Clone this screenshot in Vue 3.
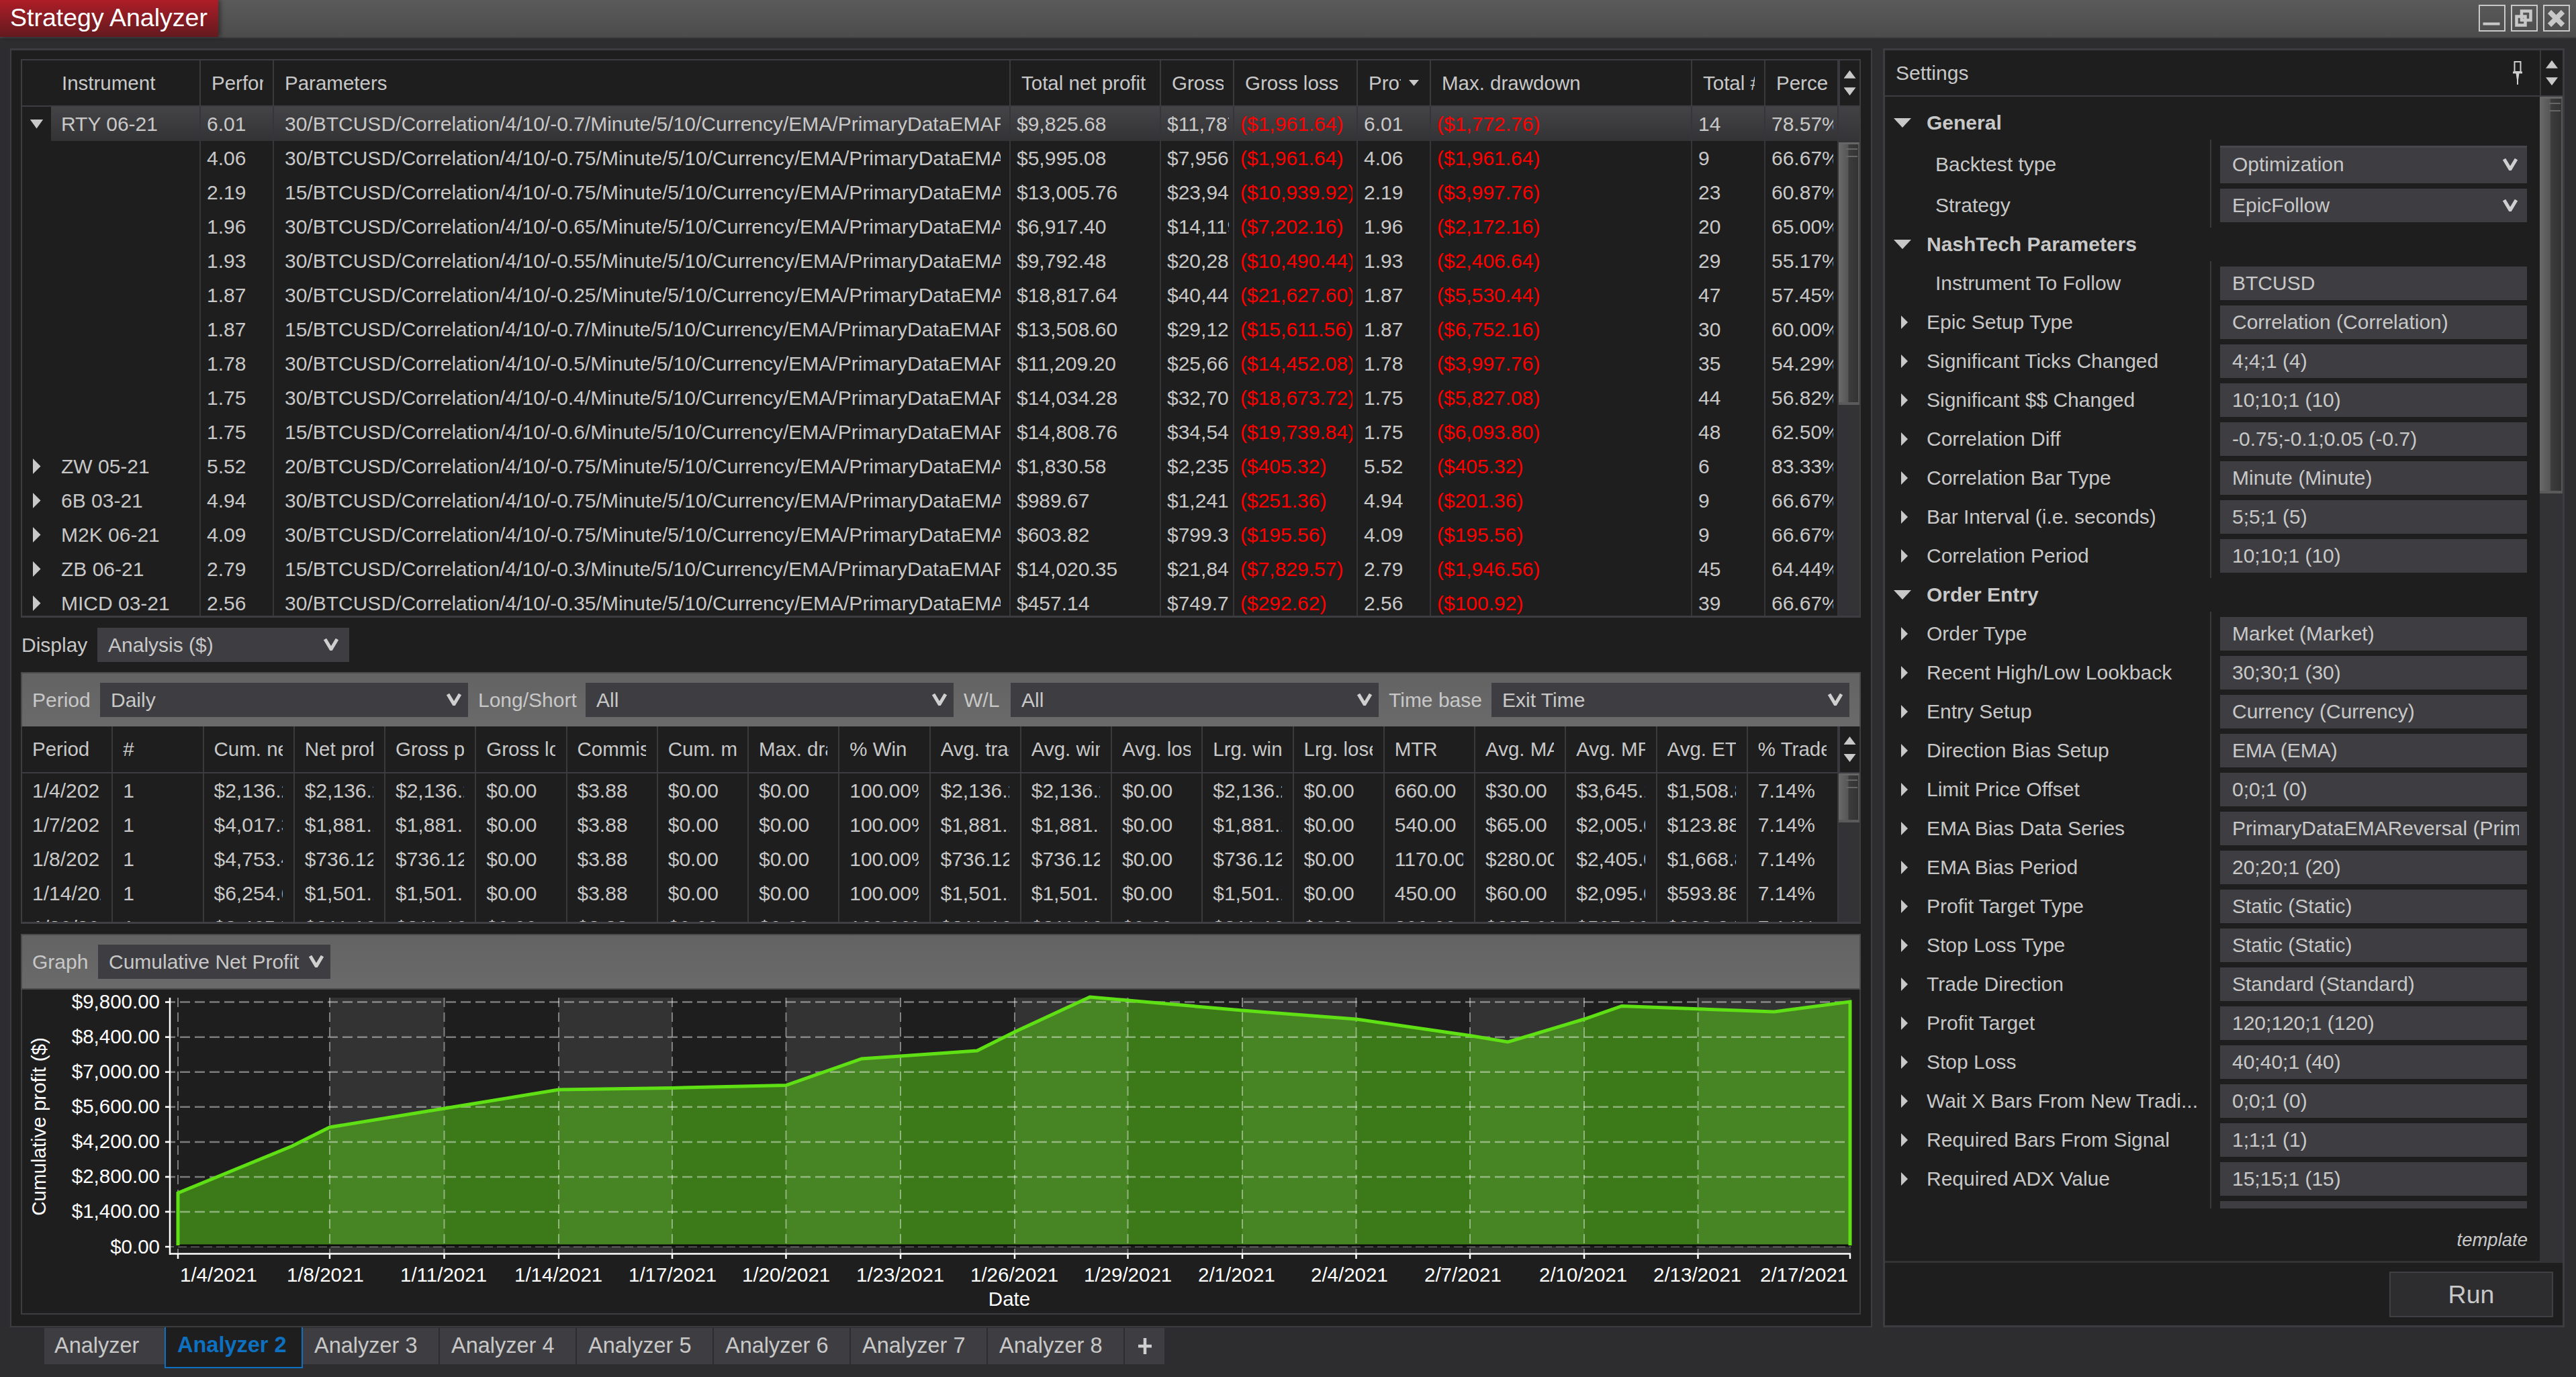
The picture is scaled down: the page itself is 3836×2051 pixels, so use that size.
<template>
  <div class="app">
    <header class="titlebar">
      <div class="title">Strategy Analyzer</div>
      <div class="win-btns">
        <button class="win-btn">
          <svg width="35" height="35" viewBox="0 0 35 35"><rect x="4.5" y="23.5" width="25" height="4" fill="#c8c8c8" /></svg>
        </button>
        <button class="win-btn">
          <svg width="35" height="35" viewBox="0 0 35 35" fill="none" stroke="#c8c8c8" stroke-width="4.5">
            <rect x="14" y="6.5" width="13.5" height="13.5" />
            <rect x="6.5" y="14.5" width="13" height="13" />
          </svg>
        </button>
        <button class="win-btn">
          <svg width="35" height="35" viewBox="0 0 35 35"><path d="M7.5 7.5L27.5 27.5M27.5 7.5L7.5 27.5" stroke="#c8c8c8" stroke-width="7.5" /></svg>
        </button>
      </div>
    </header>

    <main class="main">
      <section class="left">
        <div class="grid1">
          <div class="g1-head">
            <div class="g1-cols">
              <div class="hc exp"></div>
              <div v-for="h in headers1" :key="h.t" class="hc" :class="{ sorted: h.sort }">
                <span class="clip">{{ h.t }}</span>
                <i v-if="h.sort" class="tri down sort"></i>
              </div>
            </div>
            <div class="sb-btns">
              <i class="tri up"></i>
              <i class="tri down"></i>
            </div>
          </div>
          <div class="g1-body">
            <div class="g1-rows">
              <div v-for="(r, i) in rows1" :key="i" class="g1-cols row" :class="{ sel: i === 0 }">
                <div class="exp dc">
                  <i v-if="i === 0" class="tri down exp-tri"></i>
                  <i v-else-if="r.inst" class="tri right exp-tri"></i>
                </div>
                <div class="dc"><span class="clip inst">{{ r.inst }}</span></div>
                <div class="dc"><span class="clip">{{ r.perf }}</span></div>
                <div class="dc params"><span class="clip">{{ r.params }}</span></div>
                <div class="dc"><span class="clip">{{ money(r.net) }}</span></div>
                <div class="dc"><span class="clip">{{ money(r.net + r.loss) }}</span></div>
                <div class="dc neg"><span class="clip">({{ money(r.loss) }})</span></div>
                <div class="dc"><span class="clip">{{ r.perf }}</span></div>
                <div class="dc neg"><span class="clip">({{ money(r.dd) }})</span></div>
                <div class="dc"><span class="clip">{{ r.total }}</span></div>
                <div class="dc"><span class="clip">{{ r.pct }}%</span></div>
              </div>
            </div>
            <div class="scrollbar">
              <div class="sb-sel"></div>
              <div class="thumb thumb1"></div>
            </div>
          </div>
        </div>

        <div class="display">
          <label class="lbl">Display</label>
          <div class="select">
            Analysis ($)
            <svg class="chev" width="24" height="18" viewBox="0 0 24 18"><path d="M3 1L12 16L21 1" fill="none" stroke="#cfcfcf" stroke-width="5" /></svg>
          </div>
        </div>

        <div class="toolbar filters">
          <label class="lbl">Period</label>
          <div class="select">
            Daily
            <svg class="chev" width="24" height="18" viewBox="0 0 24 18"><path d="M3 1L12 16L21 1" fill="none" stroke="#cfcfcf" stroke-width="5" /></svg>
          </div>
          <label class="lbl">Long/Short</label>
          <div class="select">
            All
            <svg class="chev" width="24" height="18" viewBox="0 0 24 18"><path d="M3 1L12 16L21 1" fill="none" stroke="#cfcfcf" stroke-width="5" /></svg>
          </div>
          <label class="lbl">W/L</label>
          <div class="select">
            All
            <svg class="chev" width="24" height="18" viewBox="0 0 24 18"><path d="M3 1L12 16L21 1" fill="none" stroke="#cfcfcf" stroke-width="5" /></svg>
          </div>
          <label class="lbl">Time base</label>
          <div class="select">
            Exit Time
            <svg class="chev" width="24" height="18" viewBox="0 0 24 18"><path d="M3 1L12 16L21 1" fill="none" stroke="#cfcfcf" stroke-width="5" /></svg>
          </div>
        </div>

        <div class="grid2">
          <div class="g2-head">
            <div class="g2-cols">
              <div v-for="h in headers2" :key="h" class="hc2"><span class="clip">{{ h }}</span></div>
            </div>
            <div class="sb-btns">
              <i class="tri up"></i>
              <i class="tri down"></i>
            </div>
          </div>
          <div class="g2-body">
            <div class="g2-rows">
              <div v-for="(r, i) in rows2" :key="i" class="g2-cols row">
                <div v-for="(c, j) in r" :key="j" class="dc2"><span class="clip">{{ c }}</span></div>
              </div>
            </div>
            <div class="scrollbar">
              <div class="thumb thumb2"></div>
            </div>
          </div>
        </div>

        <div class="toolbar graphbar">
          <label class="lbl">Graph</label>
          <div class="select">
            Cumulative Net Profit
            <svg class="chev" width="24" height="18" viewBox="0 0 24 18"><path d="M3 1L12 16L21 1" fill="none" stroke="#cfcfcf" stroke-width="5" /></svg>
          </div>
        </div>

        <div class="chart">
          <svg class="chart-svg" viewBox="33 1474 2736 482">
            <rect v-for="b in bands" :key="b[0]" :x="b[0]" y="1486" :width="b[1] - b[0]" height="381" fill="#333333" />
            <polygon :points="areaPoints" fill="#5fe014" fill-opacity="0.48" />
            <g stroke="#ffffff" stroke-opacity="0.42" fill="none">
              <line v-for="y in gridY.slice(0, 7)" :key="y" x1="246" x2="2756" :y1="y" :y2="y" stroke-width="2.5" stroke-dasharray="15 7" />
              <line x1="246" x2="2756" y1="1857" y2="1857" stroke-width="1.5" stroke-dasharray="13 6" />
              <line v-for="x in gridX" :key="x" :x1="x" :x2="x" y1="1486" y2="1867" stroke-width="2" stroke-dasharray="14 8" />
            </g>
            <line x1="265" x2="2756" y1="1855" y2="1855" stroke="#0c0c0c" stroke-width="3" />
            <polyline :points="linePoints" fill="none" stroke="#5fe014" stroke-width="5" />
            <g stroke="#ffffff" stroke-width="2.5">
              <line x1="253" x2="253" y1="1486" y2="1869" />
              <line x1="252" x2="2756" y1="1867.5" y2="1867.5" />
              <line v-for="y in gridY" :key="'t' + y" x1="246" x2="253" :y1="y" :y2="y" />
              <line v-for="x in gridX" :key="'u' + x" :x1="x" :x2="x" y1="1867" y2="1875" />
              <line x1="2755" x2="2755" y1="1867" y2="1875" />
            </g>
            <g class="axis-txt">
              <text v-for="(l, i) in yLabels" :key="l" x="238" :y="gridY[i] + 9.5" text-anchor="end">{{ l }}</text>
              <text v-for="l in xLabels" :key="l[1]" :x="l[0]" y="1909">{{ l[1] }}</text>
              <text x="1503" y="1945" text-anchor="middle">Date</text>
              <text transform="translate(68 1678) rotate(-90)" text-anchor="middle">Cumulative profit ($)</text>
            </g>
          </svg>
        </div>
      </section>

      <aside class="settings">
        <div class="set-head">
          <span class="set-title">Settings</span>
          <svg class="pin" width="16" height="36" viewBox="0 0 16 36" fill="none" stroke="#cfcfcf" stroke-width="2">
            <rect x="3.5" y="1" width="9" height="15" />
            <path d="M1 17H15" stroke-width="3" />
            <path d="M8 18V35" />
            <path d="M5.5 18L8 35L10.5 18Z" fill="#cfcfcf" stroke="none" />
          </svg>
          <div class="sb-btns set-btns">
            <i class="tri up"></i>
            <i class="tri down"></i>
          </div>
        </div>
        <div class="set-body">
          <div class="set-content">
            <div class="set-list">
              <template v-for="g in settings" :key="g.name">
                <div class="prop-head">
                  <i class="tri down head-tri"></i>
                  <span>{{ g.name }}</span>
                </div>
                <div class="prop-group">
                  <div v-for="p in g.props" :key="p.label" class="prop" :class="p.cls">
                    <div class="prop-label" :class="{ plain: !p.arrow }">
                      <i v-if="p.arrow" class="tri right prop-tri"></i>
                      <span>{{ p.label }}</span>
                    </div>
                    <div class="prop-val">
                      <div class="val-box">
                        <span class="clip val-txt">{{ p.value }}</span>
                        <svg v-if="p.drop" class="chev" width="24" height="18" viewBox="0 0 24 18"><path d="M3 1L12 16L21 1" fill="none" stroke="#cfcfcf" stroke-width="5" /></svg>
                      </div>
                    </div>
                  </div>
                </div>
              </template>
            </div>
            <div class="template-note">template</div>
          </div>
          <div class="scrollbar set-sb">
            <div class="thumb thumb3"></div>
          </div>
        </div>
        <div class="set-foot">
          <button class="run">Run</button>
        </div>
      </aside>
    </main>

    <nav class="tabs">
      <div v-for="(t, i) in tabs" :key="t" class="tab" :class="{ first: i === 0, active: i === 1 }">{{ t }}</div>
      <div class="tab add">
        <svg width="22" height="26" viewBox="0 0 22 26"><path d="M11 1V25M1 13H21" stroke="#cfcfcf" stroke-width="4.5" /></svg>
      </div>
    </nav>
  </div>
</template>

<script setup>
const money = (v) => '$' + v.toLocaleString('en-US', { minimumFractionDigits: 2, maximumFractionDigits: 2 })

const headers1 = [
  { t: 'Instrument' },
  { t: 'Performance' },
  { t: 'Parameters' },
  { t: 'Total net profit' },
  { t: 'Gross profit' },
  { t: 'Gross loss' },
  { t: 'Profit factor', sort: true },
  { t: 'Max. drawdown' },
  { t: 'Total # of trades' },
  { t: 'Percent profitable' }
]

const par = (bars, diff) => `${bars}/BTCUSD/Correlation/4/10/${diff}/Minute/5/10/Currency/EMA/PrimaryDataEMAReversal/20`

const rows1 = [
  { inst: 'RTY 06-21', perf: '6.01', params: par(30, '-0.7'), net: 9825.68, loss: 1961.64, dd: 1772.76, total: 14, pct: '78.57' },
  { inst: '', perf: '4.06', params: par(30, '-0.75'), net: 5995.08, loss: 1961.64, dd: 1961.64, total: 9, pct: '66.67' },
  { inst: '', perf: '2.19', params: par(15, '-0.75'), net: 13005.76, loss: 10939.92, dd: 3997.76, total: 23, pct: '60.87' },
  { inst: '', perf: '1.96', params: par(30, '-0.65'), net: 6917.4, loss: 7202.16, dd: 2172.16, total: 20, pct: '65.00' },
  { inst: '', perf: '1.93', params: par(30, '-0.55'), net: 9792.48, loss: 10490.44, dd: 2406.64, total: 29, pct: '55.17' },
  { inst: '', perf: '1.87', params: par(30, '-0.25'), net: 18817.64, loss: 21627.6, dd: 5530.44, total: 47, pct: '57.45' },
  { inst: '', perf: '1.87', params: par(15, '-0.7'), net: 13508.6, loss: 15611.56, dd: 6752.16, total: 30, pct: '60.00' },
  { inst: '', perf: '1.78', params: par(30, '-0.5'), net: 11209.2, loss: 14452.08, dd: 3997.76, total: 35, pct: '54.29' },
  { inst: '', perf: '1.75', params: par(30, '-0.4'), net: 14034.28, loss: 18673.72, dd: 5827.08, total: 44, pct: '56.82' },
  { inst: '', perf: '1.75', params: par(15, '-0.6'), net: 14808.76, loss: 19739.84, dd: 6093.8, total: 48, pct: '62.50' },
  { inst: 'ZW 05-21', perf: '5.52', params: par(20, '-0.75'), net: 1830.58, loss: 405.32, dd: 405.32, total: 6, pct: '83.33' },
  { inst: '6B 03-21', perf: '4.94', params: par(30, '-0.75'), net: 989.67, loss: 251.36, dd: 201.36, total: 9, pct: '66.67' },
  { inst: 'M2K 06-21', perf: '4.09', params: par(30, '-0.75'), net: 603.82, loss: 195.56, dd: 195.56, total: 9, pct: '66.67' },
  { inst: 'ZB 06-21', perf: '2.79', params: par(15, '-0.3'), net: 14020.35, loss: 7829.57, dd: 1946.56, total: 45, pct: '64.44' },
  { inst: 'MICD 03-21', perf: '2.56', params: par(30, '-0.35'), net: 457.14, loss: 292.62, dd: 100.92, total: 39, pct: '66.67' }
]

const headers2 = ['Period', '#', 'Cum. net profit', 'Net profit', 'Gross profit', 'Gross loss', 'Commission', 'Cum. max', 'Max. drawdown', '% Win', 'Avg. trade', 'Avg. winner', 'Avg. loser', 'Lrg. win', 'Lrg. loser', 'MTR', 'Avg. MAE', 'Avg. MFE', 'Avg. ETD', '% Trades']

const row2 = (d, cum, net, mtr, mae, mfe, etd) => [d, '1', cum, net, net, '$0.00', '$3.88', '$0.00', '$0.00', '100.00%', net, net, '$0.00', net, '$0.00', mtr, mae, mfe, etd, '7.14%']

const rows2 = [
  row2('1/4/2021', '$2,136.24', '$2,136.24', '660.00', '$30.00', '$3,645.12', '$1,508.88'),
  row2('1/7/2021', '$4,017.36', '$1,881.12', '540.00', '$65.00', '$2,005.00', '$123.88'),
  row2('1/8/2021', '$4,753.48', '$736.12', '1170.00', '$280.00', '$2,405.00', '$1,668.88'),
  row2('1/14/2021', '$6,254.60', '$1,501.12', '450.00', '$60.00', '$2,095.00', '$593.88'),
  row2('1/20/2021', '$8,465.76', '$211.16', '300.00', '$285.00', '$505.00', '$293.84')
]

const gridY = [1492.6, 1544.7, 1596.8, 1648.8, 1700.9, 1752.9, 1804.9, 1857]
const gridX = [265, 491, 661.5, 832, 1001, 1170.5, 1341, 1511, 1679.5, 1850, 2019.5, 2189, 2359, 2528.5]
const bands = [[491, 661.5], [832, 1001], [1170.5, 1341], [1511, 1679.5], [1850, 2019.5], [2189, 2359], [2528.5, 2756]]
const yLabels = ['$9,800.00', '$8,400.00', '$7,000.00', '$5,600.00', '$4,200.00', '$2,800.00', '$1,400.00', '$0.00']
const xLabels = [
  [268, '1/4/2021'], [427, '1/8/2021'], [596, '1/11/2021'], [766, '1/14/2021'], [936, '1/17/2021'],
  [1105, '1/20/2021'], [1275, '1/23/2021'], [1445, '1/26/2021'], [1614, '1/29/2021'], [1784, '2/1/2021'],
  [1952, '2/4/2021'], [2121, '2/7/2021'], [2292, '2/10/2021'], [2462, '2/13/2021'], [2621, '2/17/2021']
]

const pts = [
  [265, 1777], [435, 1707], [491, 1679], [661.5, 1651], [832, 1623], [1001, 1620.4], [1170.5, 1616.5],
  [1283, 1577], [1341, 1573], [1455, 1565], [1511, 1537], [1623, 1485], [1679.5, 1490], [1850, 1505],
  [2019.5, 1518], [2189, 1542.5], [2245.5, 1552], [2359, 1518], [2415, 1498.5], [2528.5, 1502.7], [2642, 1507], [2755, 1492]
]
const str = pts.map((p) => p.join(',')).join(' ')
const areaPoints = `265,1855 ${str} 2755,1855`
const linePoints = areaPoints

const v = (label, value) => ({ label, value, arrow: true })
const settings = [
  {
    name: 'General',
    props: [
      { label: 'Backtest type', value: 'Optimization', drop: true, cls: 'tall' },
      { label: 'Strategy', value: 'EpicFollow', drop: true }
    ]
  },
  {
    name: 'NashTech Parameters',
    props: [
      { label: 'Instrument To Follow', value: 'BTCUSD' },
      v('Epic Setup Type', 'Correlation (Correlation)'),
      v('Significant Ticks Changed', '4;4;1 (4)'),
      v('Significant $$ Changed', '10;10;1 (10)'),
      v('Correlation Diff', '-0.75;-0.1;0.05 (-0.7)'),
      v('Correlation Bar Type', 'Minute (Minute)'),
      v('Bar Interval (i.e. seconds)', '5;5;1 (5)'),
      v('Correlation Period', '10;10;1 (10)')
    ]
  },
  {
    name: 'Order Entry',
    props: [
      v('Order Type', 'Market (Market)'),
      v('Recent High/Low Lookback', '30;30;1 (30)'),
      v('Entry Setup', 'Currency (Currency)'),
      v('Direction Bias Setup', 'EMA (EMA)'),
      v('Limit Price Offset', '0;0;1 (0)'),
      v('EMA Bias Data Series', 'PrimaryDataEMAReversal (Primary'),
      v('EMA Bias Period', '20;20;1 (20)'),
      v('Profit Target Type', 'Static (Static)'),
      v('Stop Loss Type', 'Static (Static)'),
      v('Trade Direction', 'Standard (Standard)'),
      v('Profit Target', '120;120;1 (120)'),
      v('Stop Loss', '40;40;1 (40)'),
      v('Wait X Bars From New Tradi...', '0;0;1 (0)'),
      v('Required Bars From Signal', '1;1;1 (1)'),
      v('Required ADX Value', '15;15;1 (15)'),
      { label: '', value: '' }
    ]
  }
]

const tabs = ['Analyzer', 'Analyzer 2', 'Analyzer 3', 'Analyzer 4', 'Analyzer 5', 'Analyzer 6', 'Analyzer 7', 'Analyzer 8']
</script>

<style>
html,
body {
  margin: 0;
  background: #2d2d30;
}
</style>

<style scoped>
.app {
  width: 3836px;
  height: 2051px;
  display: flex;
  flex-direction: column;
  background: #2d2d30;
  color: #c8c8c8;
  font-family: "Liberation Sans", Arial, sans-serif;
  font-size: 30px;
  overflow: hidden;
}

/* title bar */
.titlebar {
  height: 55px;
  flex: none;
  display: flex;
  justify-content: space-between;
  background: linear-gradient(#5a5a5a, #4c4c4c);
  border-bottom: 2px solid #3f3f42;
}
.title {
  width: 325px;
  padding-left: 15px;
  box-sizing: border-box;
  font-size: 37.5px;
  line-height: 52px;
  color: #fff;
  background: linear-gradient(#ad1d27, #631a1f);
  box-shadow: 4px 0 6px rgba(0, 0, 0, 0.35);
}
.win-btns {
  display: flex;
  gap: 8px;
  padding: 7px 9px 0 0;
}
.win-btn {
  width: 40px;
  height: 40px;
  padding: 0;
  box-sizing: border-box;
  border: 2.5px solid #c8c8c8;
  background: none;
}
.win-btn svg {
  display: block;
}

/* layout */
.main {
  height: 1920px;
  flex: none;
  display: flex;
  gap: 16px;
  padding: 15px 17px 0 15px;
  box-sizing: border-box;
}
.left {
  flex: 1;
  min-width: 0;
  box-sizing: border-box;
  display: flex;
  flex-direction: column;
  padding: 13px 15px 0 14px;
  background: #1e1e1e;
  border: 2px solid #3c3c41;
  border-top-width: 3px;
}

/* shared cells */
.clip {
  display: block;
  overflow: hidden;
  white-space: nowrap;
}
.tri {
  display: block;
  background: #c8c8c8;
}
.tri.up {
  width: 18px;
  height: 12px;
  clip-path: polygon(50% 0, 100% 100%, 0 100%);
}
.tri.down {
  width: 18px;
  height: 12px;
  clip-path: polygon(0 0, 100% 0, 50% 100%);
}
.tri.right {
  width: 10px;
  height: 20px;
  clip-path: polygon(0 0, 100% 50%, 0 100%);
}
.sb-btns {
  width: 31px;
  flex: none;
  display: flex;
  flex-direction: column;
  align-items: center;
  justify-content: space-around;
  padding: 8px 0;
  box-sizing: border-box;
  border-left: 2px solid #3a3a3e;
}
.scrollbar {
  width: 31px;
  flex: none;
  background: #333336;
  overflow: hidden;
}
.thumb {
  position: relative;
  box-sizing: border-box;
  background: linear-gradient(90deg, #6a6a6a, #565656 48%, #3c3c3c 52%, #333 100%);
  border-top: 3px solid #666;
  border-bottom: 4px solid #5a5a5a;
  border-right: 2px solid #555;
}
.thumb::before {
  content: "";
  position: absolute;
  top: 6px;
  right: 1px;
  width: 17px;
  height: 9px;
  border-top: 2px solid #666;
  border-bottom: 2px solid #666;
}
.sb-sel {
  height: 51px;
  background: linear-gradient(#424244, #343436);
}
.thumb1 {
  margin-top: 2px;
  height: 391px;
}
.thumb2 {
  height: 73px;
}
.thumb3 {
  height: 591px;
}

/* top grid */
.grid1 {
  height: 832px;
  flex: none;
  box-sizing: border-box;
  display: flex;
  flex-direction: column;
  border: 2px solid #3c3c41;
  border-bottom-width: 3px;
}
.g1-cols {
  flex: 1;
  min-width: 0;
  display: grid;
  grid-template-columns: 43px 223px 109px 1097px 224px 109px 184px 109px 389px 109px 109px;
}
.g1-head {
  height: 67px;
  flex: none;
  display: flex;
  border-bottom: 2px solid #3c3c41;
}
.hc {
  display: flex;
  align-items: center;
  gap: 12px;
  box-sizing: border-box;
  padding: 0 14px 0 16px;
  border-right: 2px solid #3a3a3e;
  min-width: 0;
  font-size: 29.5px;
}
.hc.exp {
  border-right: none;
  padding: 0;
}
.hc.sorted {
  padding-right: 16px;
}
.hc .clip {
  flex: 1;
  min-width: 0;
}
.sort {
  flex: none;
  width: 15px !important;
  height: 9px !important;
}
.g1-body {
  flex: 1;
  min-height: 0;
  display: flex;
  overflow: hidden;
}
.g1-rows {
  flex: 1;
  min-width: 0;
}
.row {
  height: 51px;
  line-height: 51px;
}
.dc {
  min-width: 0;
  box-sizing: border-box;
  padding: 0 6px 0 9px;
  border-right: 2px solid #36363a;
}
.dc.exp {
  border-right: none;
  background: #1e1e1e;
  padding: 0;
  display: flex;
  align-items: center;
  justify-content: center;
}
.dc.params {
  padding: 0 13px 0 16px;
}
.dc .inst {
  margin-left: 6px;
}
.sel .dc:not(.exp) {
  background: linear-gradient(#444446, #333335);
}
.neg {
  color: #ff0000;
}
.exp-tri.down {
  width: 20px;
  height: 14px;
}
.exp-tri.right {
  width: 12px;
  height: 24px;
}

/* display and toolbars */
.display,
.toolbar {
  display: grid;
  align-items: center;
  flex: none;
  margin-top: 15px;
}
.display {
  grid-template-columns: 114px 375px;
}
.lbl {
  padding-left: 15px;
  line-height: 51px;
}
.display .lbl {
  padding-left: 1px;
}
.select {
  position: relative;
  height: 51px;
  line-height: 51px;
  padding-left: 16px;
  background: #3e3e42;
  white-space: nowrap;
}
.chev {
  position: absolute;
  right: 13px;
  top: 16px;
}
.display .chev {
  right: 15px;
}
.toolbar .chev {
  right: 9px;
}
.toolbar {
  box-sizing: border-box;
  height: 81px;
  background: linear-gradient(#636363, #6a6a6a);
  border-left: 2px solid #4c4c4f;
  border-right: 2px solid #4c4c4f;
  border-top: 2px solid #4a4a4d;
  padding-right: 0;
}
.filters {
  grid-template-columns: 116px 548px 175px 548px 85px 548px 168px 533px;
}
.graphbar {
  grid-template-columns: 113px 346px;
  height: 83px;
  border-bottom: 2px solid #4a4a4d;
}

/* second grid */
.grid2 {
  height: 294px;
  flex: none;
  box-sizing: border-box;
  display: flex;
  flex-direction: column;
  border-left: 2px solid #3c3c41;
  border-right: 2px solid #3c3c41;
  border-bottom: 3px solid #3f3f44;
}
.g2-head {
  height: 70px;
  flex: none;
  display: flex;
  box-sizing: border-box;
  border-bottom: 2px solid #3c3c41;
}
.g2-cols {
  flex: 1;
  min-width: 0;
  display: grid;
  grid-template-columns: repeat(20, minmax(0, 1fr));
}
.hc2,
.dc2 {
  min-width: 0;
  box-sizing: border-box;
  padding: 0 16px 0 15px;
  border-right: 2px solid #3a3a3e;
}
.hc2 {
  display: flex;
  align-items: center;
  font-size: 29.5px;
}
.hc2 .clip {
  min-width: 0;
}
.g2-body {
  flex: 1;
  min-height: 0;
  display: flex;
  overflow: hidden;
}
.g2-rows {
  flex: 1;
  min-width: 0;
}

/* chart */
.chart {
  height: 484px;
  flex: none;
  box-sizing: border-box;
  border-left: 2px solid #3c3c41;
  border-right: 2px solid #3c3c41;
  border-bottom: 2px solid #3c3c41;
}
.chart-svg {
  display: block;
  width: 2736px;
  height: 482px;
}
.axis-txt {
  fill: #fff;
  font-size: 29.5px;
  font-family: "Liberation Sans", Arial, sans-serif;
}

/* settings */
.settings {
  width: 1015px;
  flex: none;
  display: flex;
  flex-direction: column;
  box-sizing: border-box;
  background: #1e1e1e;
  border: 3px solid #3c3c41;
}
.set-head {
  height: 69px;
  flex: none;
  display: flex;
  align-items: center;
  box-sizing: border-box;
  border-bottom: 2px solid #3c3c41;
}
.set-title {
  padding-left: 16px;
  flex: 1;
}
.pin {
  margin-right: 25px;
}
.set-btns {
  align-self: stretch;
  width: 34px;
}
.set-body {
  flex: 1;
  min-height: 0;
  display: flex;
}
.set-content {
  flex: 1;
  min-width: 0;
  display: flex;
  flex-direction: column;
}
.set-list {
  height: 1656px;
  flex: none;
  padding-top: 10px;
  box-sizing: border-box;
  overflow: hidden;
}
.set-sb {
  width: 34px;
}
.prop-head {
  height: 58px;
  display: flex;
  align-items: center;
  font-weight: bold;
  padding-left: 13px;
}
.head-tri {
  width: 26px !important;
  height: 14px !important;
  margin-right: 23px;
}
.prop-group {
  position: relative;
}
.prop-group::before {
  content: "";
  position: absolute;
  left: 484px;
  top: -4px;
  bottom: -4px;
  width: 2px;
  background: #3a3a3e;
}
.prop {
  height: 58px;
  display: grid;
  grid-template-columns: 484px minmax(0, 1fr);
  align-items: center;
}
.prop.tall {
  height: 65px;
}
.prop.tall .val-box {
  height: 56px;
  line-height: 50px;
  border-top: 3px solid #48484c;
  box-sizing: border-box;
}
.prop-label {
  display: flex;
  align-items: center;
  padding-left: 24px;
  white-space: nowrap;
}
.prop-label.plain {
  padding-left: 75px;
}
.prop-tri {
  margin-right: 28px;
}
.prop-val {
  padding: 0 19px 0 15px;
}
.val-box {
  position: relative;
  height: 50px;
  line-height: 50px;
  padding-left: 18px;
  background: #3e3e42;
  overflow: hidden;
}
.val-txt {
  margin-right: 12px;
}
.template-note {
  margin-top: 31px;
  padding-right: 18px;
  text-align: right;
  font-style: italic;
  font-size: 27.5px;
}
.set-foot {
  height: 96px;
  flex: none;
  display: flex;
  align-items: flex-start;
  justify-content: flex-end;
  box-sizing: border-box;
  padding: 13px 14px 0 0;
  border-top: 3px solid #333336;
}
.run {
  width: 244px;
  height: 68px;
  padding: 0;
  background: #2d2d30;
  border: 2px solid #3f3f44;
  color: #c8c8c8;
  font-family: inherit;
  font-size: 37.5px;
}

/* bottom tabs */
.tabs {
  display: flex;
  padding-left: 66px;
  height: 54px;
  flex: none;
  margin-top: 1px;
}
.tab {
  width: 204px;
  box-sizing: border-box;
  padding-left: 17px;
  font-size: 32.5px;
  line-height: 52px;
  background: #3e3e42;
  border-right: 2px solid #2d2d30;
  white-space: nowrap;
}
.tab.first {
  width: 179px;
  padding-left: 15px;
  border-right: none;
}
.tab.active {
  width: 206px;
  height: 61px;
  margin-top: -1px;
  padding: 0 0 0 17px;
  background: #1e1e1e;
  color: #0e70c0;
  font-weight: bold;
  border: 2px solid #0e70c0;
  border-top: none;
}
.tab.add {
  width: 59px;
  padding: 0;
  border-right: none;
  display: flex;
  align-items: center;
  justify-content: center;
}
</style>
